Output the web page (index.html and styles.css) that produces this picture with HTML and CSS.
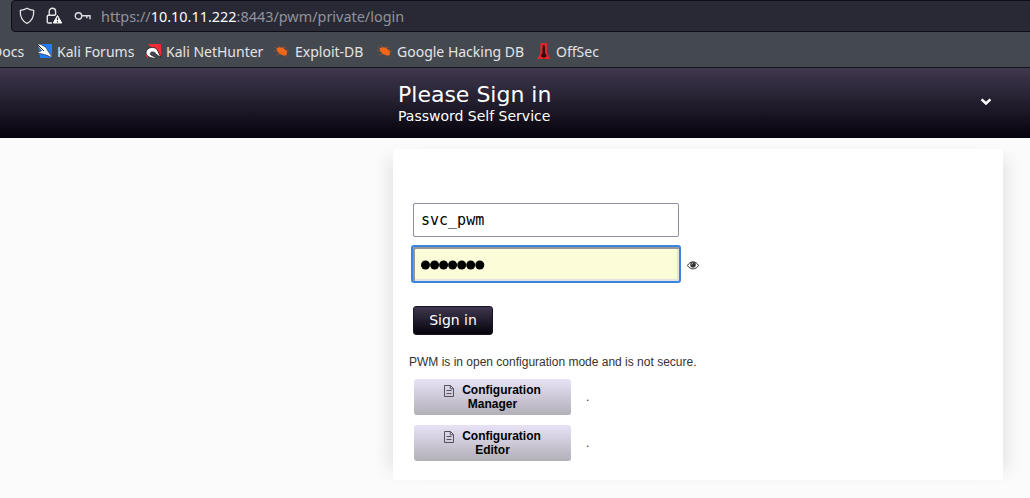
FILE: index.html
```html
<!DOCTYPE html>
<html lang="en">
<head>
<meta charset="utf-8">
<title>Please Sign in</title>
<link rel="stylesheet" href="styles.css">
</head>
<body>
<div class="chrome">
  <div class="urlbar">
    <svg class="shield" width="16" height="18" viewBox="0 0 16 18"><path d="M8 1.2C5.9 2.5 3.8 3.1 1.3 3.4C1 9 2.4 13.7 8 16.5C13.6 13.7 15 9 14.7 3.4C12.2 3.1 10.1 2.5 8 1.2Z" fill="none" stroke="#e5e5e8" stroke-width="1.3" stroke-linejoin="round"/></svg>
    <svg class="lock" width="17" height="18" viewBox="0 0 17 18"><path d="M6 16H2.3Q1.3 16 1.3 15V9.3Q1.3 8.3 2.3 8.3H9.5M3.2 8V4.4A3.2 3.2 0 0 1 9.6 4.4V8" fill="none" stroke="#e5e5e8" stroke-width="1.4"/><path d="M11.5 8.5L15.7 16H7.3Z" fill="#fff" stroke="#fff" stroke-linejoin="round"/><path d="M11.5 10.5v2.7M11.5 14.2v1.2" stroke="#282934" stroke-width="1.2"/></svg>
    <svg class="key" width="18" height="10" viewBox="0 0 18 10"><circle cx="4.5" cy="5" r="3.2" fill="none" stroke="#dedee2" stroke-width="1.4"/><path d="M7.8 4.7H16V8.2M12.8 4.7V7.2" fill="none" stroke="#dedee2" stroke-width="1.4"/></svg>
    <span class="url">https://<span class="host">10.10.11.222</span>:8443/pwm/private/login</span>
  </div>
  <nav class="bookmarks">
    <span class="bm docs">Docs</span>
    <span class="bm forums"><svg width="17" height="16" viewBox="0 0 17 16"><path d="M2 1H16V15H4Z" fill="#247cf5"/><path d="M0 .5L5 1.5L10 4.5L12 8L16.5 14.8L11 12.3L4.5 10.5L.5 10L5.5 7.8Z" fill="#fff" stroke="#1c222c" stroke-width=".6"/><path d="M1 1L6 6L8 8" stroke="#222" fill="none"/></svg><span>Kali Forums</span></span>
    <span class="bm nethunter"><svg width="17" height="16" viewBox="0 0 17 16"><path d="M3 1H16V14L10 9Z" fill="#f12b32"/><path d="M1 9C2 4 9 3 12 6.5L16 14.5L12 12C9 7 3.5 9 6 12L12 15C6 16 .8 13.5 1 9Z" fill="#fff" stroke="#171b21" stroke-width=".8"/><path d="M.6 11.5L3 14.8" stroke="#dd2930" stroke-width="1.3"/></svg><span>Kali NetHunter</span></span>
    <span class="bm exploit"><svg width="16" height="16" viewBox="0 0 16 16"><path d="M1 4L4 6M0 8L5 7.5M4 2L6 5M8 4L12 4.5M12 7L15 8M6 11L2 12M10 12L13 13.5" stroke="#9e522c" stroke-width=".8"/><path d="M2.5 5.5L5 4.2L9 4.8L11.5 7L13.5 9L12.5 10.5L13 12L9.5 12.5L6 11L3.5 8.5Z" fill="#f26619"/></svg><span>Exploit-DB</span></span>
    <span class="bm google"><svg width="16" height="16" viewBox="0 0 16 16"><path d="M1 4L4 6M0 8L5 7.5M4 2L6 5M8 4L12 4.5M12 7L15 8M6 11L2 12M10 12L13 13.5" stroke="#9e522c" stroke-width=".8"/><path d="M2.5 5.5L5 4.2L9 4.8L11.5 7L13.5 9L12.5 10.5L13 12L9.5 12.5L6 11L3.5 8.5Z" fill="#f26619"/></svg><span>Google Hacking DB</span></span>
    <span class="bm offsec"><svg width="14" height="17" viewBox="0 0 14 17"><path d="M3.5 0H10V10L13.5 16H0L3.5 10Z" fill="#e3252b"/><path d="M6 2H7.5L8 5V10L9.5 12V14H7.7L7 16L6 14H4V12L5.5 10V5Z" fill="#360b10"/></svg><span>OffSec</span></span>
  </nav>
</div>
<header class="header">
  <div class="titles"><div class="title">Please Sign in</div><div class="subtitle">Password Self Service</div></div>
  <svg class="chevron" width="12" height="9" viewBox="0 0 12 9"><path d="M1.6 2.3L6 6.5L10.4 2.3" fill="none" stroke="#fff" stroke-width="2.5"/></svg>
</header>
<main class="panel">
  <input class="field" type="text" value="svc_pwm" aria-label="Username">
  <div class="password-row">
    <div class="password"><svg width="65" height="10" viewBox="0 0 65 10"><g fill="#000"><circle cx="4.5" cy="5" r="4.5"/><circle cx="13.6" cy="5" r="4.5"/><circle cx="22.6" cy="5" r="4.5"/><circle cx="31.6" cy="5" r="4.5"/><circle cx="40.7" cy="5" r="4.5"/><circle cx="49.7" cy="5" r="4.5"/><circle cx="58.8" cy="5" r="4.5"/></g></svg></div>
    <svg class="eye" width="12" height="9" viewBox="0 0 12 9"><path d="M.5 4.5C3-.4 9-.4 11.5 4.5C9 9 3 9 .5 4.5Z" fill="none" stroke="#333"/><circle cx="6" cy="3.8" r="2.8" fill="#333"/><path d="M4.5 3.7Q4.6 2.4 6 2.3" stroke="#ddd" fill="none" stroke-width=".7"/></svg>
  </div>
  <button class="signin">Sign in</button>
  <p class="notice">PWM is in open configuration mode and is not secure.</p>
  <div class="config-row"><button class="config"><svg width="10" height="12" viewBox="0 0 10 12"><path d="M.5.5H6.5L9.5 3.5V11.5H.5ZM6.3.5V3.8H9.5M2.5 5.5H7.5M2.5 8.5H7.5" fill="none" stroke="#55515d"/></svg>Configuration<br>Manager</button><span class="dot">.</span></div>
  <div class="config-row"><button class="config"><svg width="10" height="12" viewBox="0 0 10 12"><path d="M.5.5H6.5L9.5 3.5V11.5H.5ZM6.3.5V3.8H9.5M2.5 5.5H7.5M2.5 8.5H7.5" fill="none" stroke="#55515d"/></svg>Configuration<br>Editor</button><span class="dot">.</span></div>
</main>
</body>
</html>
```
FILE: styles.css
```css
* { box-sizing: border-box; }
body { margin: 0; width: 1030px; height: 498px; overflow: hidden; background: #fbfbfb; font-family: "Liberation Sans", sans-serif; }
svg { display: block; flex: none; }
.chrome { height: 68px; background: #44484f; border-bottom: 1px solid #11121a; font-family: "Noto Sans", sans-serif; overflow: hidden; }
.urlbar { height: 32px; margin-left: 11px; width: 1030px; border: 1px solid #0e0f16; border-radius: 4px; background: #282934; display: flex; align-items: center; }
.shield { margin-left: 7px; }
.lock { margin-left: 11px; }
.key { margin-left: 11px; }
.url { margin-left: 9px; padding-top: 2px; color: #92939b; font-size: 14.43px; line-height: 20px; white-space: nowrap; }
.host { color: #fbfbfe; }
.bookmarks { height: 36px; padding-top: 2px; display: flex; align-items: center; color: #e4e4e6; font-size: 14px; white-space: nowrap; }
.bm { display: flex; align-items: center; flex: none; gap: 4px; }
.docs { width: 36px; margin-left: -8px; margin-right: 8px; }
.forums { width: 109px; }
.nethunter { width: 129px; }
.exploit { width: 103px; gap: 5px; }
.google { width: 160px; gap: 4px; }
.offsec { gap: 5px; }
.header { height: 70px; background: linear-gradient(#40384f, #05030c); display: flex; color: #fff; font-family: "DejaVu Sans", sans-serif; }
.titles { padding: 14px 0 0 398px; width: 980px; }
.title { font-size: 22px; line-height: 26px; }
.subtitle { font-size: 14px; line-height: 16px; }
.chevron { margin-top: 29px; }
.panel { width: 610px; height: 331px; margin: 11px 0 0 393px; padding: 54px 16px 0; background: #fff; border-radius: 4px; box-shadow: 15px 0 15px -10px #e5e5e5, -15px 0 15px -10px #e5e5e5; }
.field { display: block; width: 266px; height: 34px; margin: 0 0 8px 4px; padding: 0 7px; border: 1px solid #8f8f9d; border-radius: 2px; background: #fff; color: #000; font: 15px "DejaVu Sans Mono", monospace; }
.password-row { display: flex; align-items: center; margin-left: 2px; gap: 6px; height: 38px; }
.password { width: 270px; height: 38px; border: 2px solid #3984df; border-radius: 3px; background: #fcfcd8; box-shadow: inset 2px 2px #96949b, inset -2px -2px #e3e3e3; display: flex; align-items: center; padding: 2px 0 0 8px; }
.eye { margin-top: 3px; }
.signin { display: block; width: 80px; height: 29px; margin: 23px 0 0 4px; padding: 0 0 2px; border: 1px solid #171322; border-radius: 3px; color: #fff; background: linear-gradient(#40384f, #05030c); font: 14px "DejaVu Sans", sans-serif; }
.notice { margin: 19px 0 9px; font-size: 12px; line-height: 16px; color: #333; }
.config-row { display: flex; align-items: center; gap: 15px; margin: 0 0 10px 5px; height: 36px; }
.config { width: 157px; height: 36px; padding: 0; border: 0; border-radius: 3px; background: linear-gradient(#e8e2f6, #b2b0b8); color: #000; font: bold 12px/14px "Liberation Sans", sans-serif; }
.config svg { display: inline-block; margin-right: 8px; vertical-align: -3px; }
.dot { font-size: 12px; color: #333; }
```
